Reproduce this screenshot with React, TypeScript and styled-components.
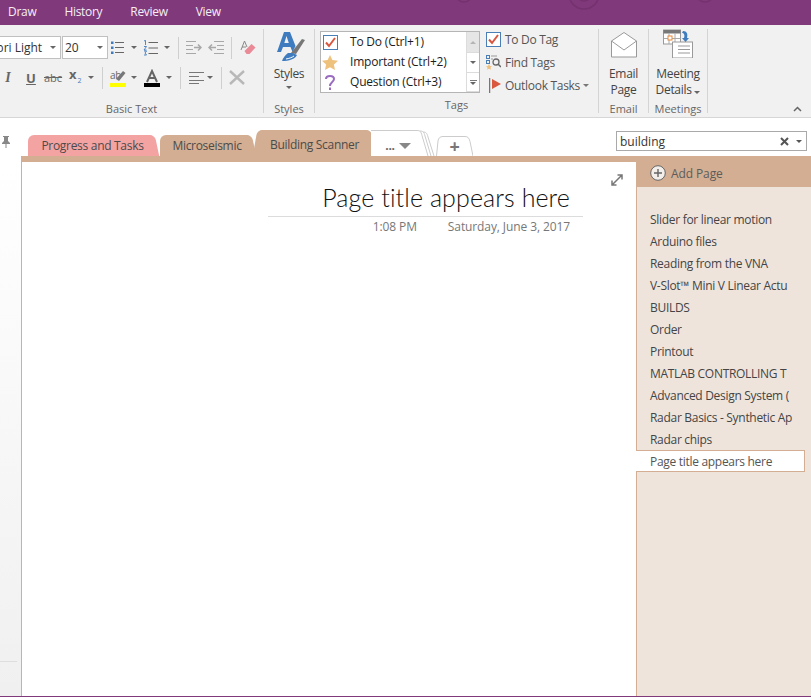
import React from "react";
import styled, { createGlobalStyle } from "styled-components";

const Global = createGlobalStyle`
  html, body { margin: 0; padding: 0; width: 811px; height: 697px; overflow: hidden; background: #fff; }
  body { font-family: "Open Sans", "Noto Sans", "Liberation Sans", sans-serif; letter-spacing: -0.3px; }
  * { box-sizing: border-box; }
`;

const Shell = styled.div`
  width: 811px; height: 697px; display: flex; flex-direction: column; overflow: hidden;
  border-bottom: 1px solid #80397b;
`;
const TitleBar = styled.div`
  position: relative; height: 25px; flex: none; background: #80397b; color: #fff;
  display: flex; align-items: center; font-size: 12px; padding: 0 0 2px 8px; gap: 28px; overflow: hidden;
`;
const Swirl = styled.svg`position: absolute; left: 440px; top: 0;`;
const Menu = styled.span`color: #f6eef5;`;

const Ribbon = styled.div`
  height: 93px; flex: none; background: #f1f1f1; border-bottom: 1px solid #d6d6d6;
  display: flex; position: relative; padding-top: 4px; color: #444;
`;
const Group = styled.section<{ $w: number }>`
  width: ${p => p.$w}px; height: 84px; flex: none; border-right: 1px solid #d4d4d4;
  display: flex; flex-direction: column; position: relative;
`;
const GroupBody = styled.div`height: 72px; flex: none; display: flex; flex-direction: column;`;
const GroupLabel = styled.div`
  text-align: center; font-size: 11px; line-height: 16px; color: #666; letter-spacing: 0;
`;
const ToolRow = styled.div<{ $top: number }>`
  display: flex; align-items: center; height: 23px; margin-top: ${p => p.$top}px;
`;
const SelectBox = styled.div<{ $w: number; $ml?: number }>`
  width: ${p => p.$w}px; height: 23px; flex: none; margin-left: ${p => p.$ml ?? 0}px; background: #fff;
  border: 1px solid #c0c0c0; display: flex; align-items: center; justify-content: space-between;
  font-size: 12px; color: #333; padding: 0 4px 0 2px; letter-spacing: 0;
`;
const SelectText = styled.span<{ $indent?: number }>`padding-left: ${p => p.$indent ?? 0}px; white-space: nowrap;`;
const Caret = styled.i<{ $ml?: number; $mr?: number; $c?: string; $s?: number }>`
  display: inline-block; flex: none; width: 0; height: 0; margin-left: ${p => p.$ml ?? 0}px; margin-right: ${p => p.$mr ?? 0}px;
  border-left: ${p => p.$s ?? 3}px solid transparent; border-right: ${p => p.$s ?? 3}px solid transparent;
  border-top: ${p => p.$s ?? 3}px solid ${p => p.$c ?? "#666"};
`;
const Ico = styled.svg<{ $ml?: number }>`flex: none; display: block; margin-left: ${p => p.$ml ?? 0}px;`;
const VLine = styled.span<{ $ml: number; $h?: number }>`
  flex: none; width: 1px; height: ${p => p.$h ?? 22}px; background: #cfcfcf; margin-left: ${p => p.$ml}px;
`;
const Fmt = styled.span<{ $w: number; $ml: number }>`
  flex: none; width: ${p => p.$w}px; margin-left: ${p => p.$ml}px; text-align: center; color: #666;
  font-size: 13px; line-height: 16px; letter-spacing: 0;
`;
const Italic = styled(Fmt)`font-style: italic; font-family: "Liberation Serif", serif; font-weight: 700; font-size: 14px;`;
const Under = styled(Fmt)`text-decoration: underline; font-weight: 700; font-size: 13px;`;
const Strike = styled(Fmt)`text-decoration: line-through; font-size: 11px;`;
const Sub = styled(Fmt)`font-weight: 700; font-size: 13px; text-align: left; sub { font-size: 7px; color: #3f7cbf; font-weight: 400; margin-left: 1px; }`;

const BigTool = styled.div`
  display: flex; flex-direction: column; align-items: center; font-size: 12px; line-height: 16px; color: #444;
`;
const BigIcon = styled.div<{ $h: number }>`height: ${p => p.$h}px; flex: none; display: flex; align-items: flex-end; justify-content: center;`;
const BigText = styled.span<{ $mt?: number }>`margin-top: ${p => p.$mt ?? 0}px; white-space: nowrap;`;
const BigCaretRow = styled.div`height: 11px; display: flex; align-items: center;`;

const TagsBody = styled.div`display: flex; padding: 2px 0 0 5px; height: 72px;`;
const Gallery = styled.div`
  width: 160px; height: 62px; border: 1px solid #b5b5b5; background: #fff; display: flex; flex: none;
`;
const GalleryList = styled.div`flex: 1; display: flex; flex-direction: column;`;
const GalleryItem = styled.div`
  height: 20px; display: flex; align-items: center; font-size: 12px; color: #1c1c1c; white-space: nowrap; padding-bottom: 2px; letter-spacing: -0.2px;
`;
const GalleryIcon = styled.span`width: 29px; flex: none; display: flex; justify-content: flex-start; padding-left: 1px; margin-top: 2px;`;
const IconSlot = styled.span`width: 16px; display: flex; justify-content: center;`;
const ScrollCol = styled.div`width: 13px; flex: none; display: flex; flex-direction: column; border-left: 1px solid #dcdcdc;`;
const ScrollBtn = styled.div<{ $bg?: string; $h: number }>`
  height: ${p => p.$h}px; background: ${p => p.$bg ?? "#fff"}; display: flex; flex-direction: column; gap: 1px; align-items: center; justify-content: center;
  border-bottom: 1px solid #dcdcdc;
`;
const UpCaret = styled.i`
  display: block; width: 0; height: 0; border-left: 3px solid transparent; border-right: 3px solid transparent; border-bottom: 3px solid #b5b5b5;
`;
const Bar = styled.i`display: block; width: 7px; height: 1px; background: #777;`;
const TagActions = styled.div`display: flex; flex-direction: column; margin-left: 6px; margin-top: -3px;`;
const TagAction = styled.div`
  height: 23px; display: flex; align-items: center; font-size: 12px; color: #555; white-space: nowrap; gap: 4px;
`;
const Collapse = styled.svg`position: absolute; right: 9px; bottom: 5px;`;

const TabStrip = styled.div`
  height: 38px; flex: none; display: flex; align-items: flex-end; background: #fff; position: relative; isolation: isolate;
`;
const Pin = styled.svg`flex: none; margin: 0 17px 8px 1px; align-self: flex-end;`;
const Tab = styled.div<{ $w: number; $h: number; $bg: string; $ml?: number; $fg?: string }>`
  position: relative; width: ${p => p.$w}px; height: ${p => p.$h}px; margin-left: ${p => p.$ml ?? 0}px; flex: none;
  font-size: 12px; color: ${p => p.$fg ?? "#4b4b4b"}; display: flex; align-items: center; justify-content: center; white-space: nowrap;
  background: ${p => p.$bg}; border-radius: 6px 6px 0 0;
  padding-left: 3px;
  &::after {
    content: ""; position: absolute; top: 0; bottom: 0; right: -3px; width: 10px; background: ${p => p.$bg};
    transform: skewX(12deg); border-radius: 0 5px 0 0; z-index: -1;
  }
`;
const ActiveTab = styled(Tab)`
  padding: 2px 0 0 0;
  &::before {
    content: ""; position: absolute; top: 0; bottom: 0; left: -3px; width: 10px; background: ${p => p.$bg};
    transform: skewX(-10deg); border-radius: 5px 0 0 0; z-index: -1;
  }
`;
const TabLabel = styled.span`
  position: relative; display: flex; align-items: center; gap: 4px; font-size: 12px; font-weight: 700; color: #666;
`;
const OverflowTab = styled.div`
  position: relative; flex: none; width: 60px; height: 26px; background: #fff;
  display: flex; align-items: center; justify-content: center; padding: 5px 6px 0 0;
`;
const TabSvg = styled.svg`position: absolute; left: 0; top: 0;`;
const PlusTab = styled.div`
  position: relative; flex: none; width: 37px; height: 20px; margin-left: 5px;
  display: flex; align-items: center; justify-content: center; font-size: 18px; line-height: 1; font-weight: 700; color: #777;
`;
const PlusGlyph = styled.span`position: relative;`;
const Search = styled.div`
  position: absolute; right: 4px; top: 13px; width: 191px; height: 20px; border: 1px solid #a9a9a9; background: #fff;
  display: flex; align-items: center; font-size: 12px; color: #333; padding: 0 4px 0 3px; letter-spacing: 0;
`;
const SearchText = styled.span`flex: 1;`;

const TanBar = styled.div`height: 6px; flex: none; margin-left: 21px; background: #d3ae92;`;
const Main = styled.div`flex: 1; min-height: 0; display: flex;`;
const LeftRail = styled.div`
  width: 22px; flex: none; background: linear-gradient(#fff 0%, #f0f0f0 100%); border-right: 1px solid #d3ae92;
  display: flex; flex-direction: column; justify-content: flex-end;
`;
const RailRule = styled.div`height: 1px; width: 17px; background: #dedede; margin-bottom: 34px;`;
const Page = styled.div`width: 614px; flex: none; background: #fff; position: relative; padding: 20px 0 0 246px;`;
const Expand = styled.svg`position: absolute; right: 13px; top: 12px;`;
const PageHead = styled.div`width: 315px;`;
const PageTitle = styled.div`
  font-family: "Lato", "Open Sans", sans-serif; font-weight: 300; font-size: 25px; letter-spacing: 0.1px; line-height: 31px; color: #111; text-align: right;
  padding-right: 13px; border-bottom: 1px solid #dcdcdc; white-space: nowrap; height: 35px;
`;
const PageMeta = styled.div`
  display: flex; justify-content: flex-end; gap: 31px; padding-right: 13px; font-size: 12px; letter-spacing: -0.1px; line-height: 20px; color: #777;
`;
const Side = styled.aside`
  flex: 1; min-width: 0; background: #efe4dc; display: flex; flex-direction: column; border-left: 1px solid #d3ae92;
`;
const AddPage = styled.div`
  height: 25px; flex: none; margin-left: -1px; background: #d3ae92; display: flex; align-items: center; gap: 5px; padding: 0 0 3px 14px;
  font-size: 12px; color: #5c5c5c; letter-spacing: -0.1px;
`;
const PageList = styled.div`padding-top: 21px; display: flex; flex-direction: column;`;
const PageItem = styled.div<{ $active?: boolean }>`
  height: 22px; flex: none; display: flex; align-items: center; padding-left: 13px; font-size: 12px; white-space: nowrap;
  color: #444; margin-right: ${p => (p.$active ? "6px" : "0")};
  ${p => p.$active && `
    background: #fff; border: 1px solid #d3ae92; border-left: 0; margin-left: -1px; padding-left: 14px; color: #555;
  `}
`;

const pages = [
  "Slider for linear motion", "Arduino files", "Reading from the VNA", "V-Slot™ Mini V Linear Actu", "BUILDS", "Order",
  "Printout", "MATLAB CONTROLLING T", "Advanced Design System (", "Radar Basics - Synthetic Ap", "Radar chips",
];

const CheckBox = () => (
  <Ico width={15} height={15} viewBox="0 0 15 15">
    <rect x=".5" y=".5" width="14" height="14" fill="#fff" stroke="#4a7fb5" />
    <path d="M3 7.5 6 11l6-8" fill="none" stroke="#d9563f" strokeWidth="2" />
  </Ico>
);

export default function App() {
  return (
    <Shell>
      <Global />
      <TitleBar>
        <Menu>Draw</Menu><Menu>History</Menu><Menu>Review</Menu><Menu>View</Menu>
        <Swirl width="290" height="25" viewBox="0 0 290 25" fill="none" stroke="#74326f" strokeWidth="1.5">
          <circle cx="144" cy="-6" r="7" /><circle cx="144" cy="-6" r="15" /><circle cx="24" cy="-6" r="8" /><circle cx="265" cy="-6" r="8" />
        </Swirl>
      </TitleBar>

      <Ribbon>
        <Group $w={264}>
          <GroupBody>
            <ToolRow $top={7}>
              <SelectBox $w={101} $ml={-40}><SelectText $indent={13}>Calibri Light</SelectText><Caret /></SelectBox>
              <SelectBox $w={46} $ml={1}><SelectText>20</SelectText><Caret /></SelectBox>
              <Ico $ml={2} width="15" height="15" viewBox="0 0 15 15"><path d="M5 2.5h9M5 7.5h9M5 12.5h9" stroke="#666" /><path d="M1 1.5h2.5v2.5H1zM1 6.5h2.5V9H1zM1 11.5h2.5V14H1z" fill="#3f7cbf" /></Ico>
              <Caret $ml={6} />
              <Ico $ml={6} width="15" height="16" viewBox="0 0 15 16"><path d="M5.5 2.5H15M5.5 8H15M5.5 13.5H15" stroke="#666" /><path d="M1 1l1.5-.7V5M1 6.5h2.5L1 10h2.5M1 11h2.5L2 13l1.5 2H1" fill="none" stroke="#3f7cbf" strokeWidth=".9" /></Ico>
              <Caret $ml={6} />
              <VLine $ml={8} />
              <Ico $ml={7} width="16" height="13" viewBox="0 0 16 13"><path d="M0 .5h10M0 4.5h7M0 8.5h7M0 12.5h10" stroke="#a8a8a8" /><path d="M8 6.5h7M12 3.5l3 3-3 3" fill="none" stroke="#a8a8a8" strokeWidth="1.5" /></Ico>
              <Ico $ml={6} width="16" height="13" viewBox="0 0 16 13"><path d="M6 .5h10M9 4.5h7M9 8.5h7M6 12.5h10" stroke="#a8a8a8" /><path d="M8 6.5H1M4 3.5l-3 3 3 3" fill="none" stroke="#a8a8a8" strokeWidth="1.5" /></Ico>
              <VLine $ml={7} />
              <Ico $ml={8} width="16" height="16" viewBox="0 0 16 16"><path d="M1 10 4.500 1 7 7M2 7h4" fill="none" stroke="#888" /><path d="m4.500 11 7-7 4 3.500-6 6.500-3 0z" fill="#e98a96" /></Ico>
            </ToolRow>
            <ToolRow $top={7}>
              <Italic $w={10} $ml={3}>I</Italic>
              <Under $w={12} $ml={12}>U</Under>
              <Strike $w={17} $ml={7}>abc</Strike>
              <Sub $w={16} $ml={8}>x<sub>2</sub></Sub>
              <Caret $ml={3} />
              <VLine $ml={8} />
              <Ico $ml={7} width="16" height="18" viewBox="0 0 16 18"><text x="0" y="10" fontSize="10" fill="#666">ab</text><path d="m6 10 7-8 2.5 2L9 12z" fill="#777" /><rect y="14" width="16" height="4" fill="#ffff00" /></Ico>
              <Caret $ml={5} />
              <Ico $ml={7} width="16" height="18" viewBox="0 0 16 18"><path d="M3 13 8 2l5 11M5 9h6" fill="none" stroke="#666" strokeWidth="2" /><rect y="14" width="16" height="4" fill="#000" /></Ico>
              <Caret $ml={6} />
              <VLine $ml={8} />
              <Ico $ml={8} width="15" height="12" viewBox="0 0 15 12"><path d="M0 .5h15M0 4.5h10M0 8.5h15M0 11.5h10" stroke="#777" /></Ico>
              <Caret $ml={3} />
              <VLine $ml={8} />
              <Ico $ml={7} width="16" height="15" viewBox="0 0 16 15"><path d="m1 1 14 13M15 1 1 14" stroke="#b8b8b8" strokeWidth="2.4" /></Ico>
            </ToolRow>
          </GroupBody>
          <GroupLabel>Basic Text</GroupLabel>
        </Group>

        <Group $w={51}>
          <GroupBody>
            <BigTool>
              <BigIcon $h={33}>
                <Ico $ml={3} width="28" height="30" viewBox="0 0 28 30">
                  <path d="M0 20 7 0h6l5.500 14-3 6-2-5H6l-2 5z M7.300 11h4.500L9.500 4z" fill="#3f7cbf" fillRule="evenodd" />
                  <path d="m14 21 11-14 3 1-9 14z" fill="#777" />
                  <path d="M5 29c1-3 3-6 6-8h5l4 2c-2 4-8 6-15 6z" fill="#3f7cbf" />
                  <path d="M9 27c3-.5 6-1.500 8-3" fill="none" stroke="#fff" />
                </Ico>
              </BigIcon>
              <BigText $mt={4}>Styles</BigText>
              <BigCaretRow><Caret /></BigCaretRow>
            </BigTool>
          </GroupBody>
          <GroupLabel>Styles</GroupLabel>
        </Group>

        <Group $w={284}>
          <TagsBody>
            <Gallery>
              <GalleryList>
                <GalleryItem><GalleryIcon><IconSlot><CheckBox /></IconSlot></GalleryIcon>To Do (Ctrl+1)</GalleryItem>
                <GalleryItem><GalleryIcon><IconSlot><Ico width="16" height="15" viewBox="0 0 16 15"><path d="m8 0 2.4 5 5.600.7-4.100 3.800 1.100 5.500L8 12.300 3 15l1.100-5.500L0 5.700 5.600 5z" fill="#eec17d" /></Ico></IconSlot></GalleryIcon>Important (Ctrl+2)</GalleryItem>
                <GalleryItem><GalleryIcon><IconSlot><Ico width="10" height="15" viewBox="0 0 10 15"><path d="M1 4c0-4 8-4 8 0 0 3-4 3-4 7" fill="none" stroke="#9a6cc0" strokeWidth="2" /><rect x="4" y="12.5" width="2" height="2.5" fill="#9a6cc0" /></Ico></IconSlot></GalleryIcon>Question (Ctrl+3)</GalleryItem>
              </GalleryList>
              <ScrollCol>
                <ScrollBtn $h={21} $bg="#e6e6e6"><UpCaret /></ScrollBtn>
                <ScrollBtn $h={20}><Caret /></ScrollBtn>
                <ScrollBtn $h={19}><Bar /><Caret /></ScrollBtn>
              </ScrollCol>
            </Gallery>
            <TagActions>
              <TagAction><CheckBox />To Do Tag</TagAction>
              <TagAction>
                <Ico width="15" height="15" viewBox="0 0 15 15"><rect x=".5" y=".5" width="3" height="3" fill="none" stroke="#4a7fb5" /><rect x=".5" y="5.5" width="3" height="3" fill="none" stroke="#4a7fb5" /><path d="M5 1h6M5 4h2" stroke="#999" /><circle cx="10" cy="7" r="3" fill="none" stroke="#666" strokeWidth="1.3" /><path d="m12 9 3 3" stroke="#666" strokeWidth="1.5" /><path d="m3 9 1 2 2 .2-1.500 1.400.4 2.200L3 13.800 1.100 14.800l.4-2.200L0 11.200 2 11z" fill="#eec17d" /></Ico>
                Find Tags
              </TagAction>
              <TagAction>
                <Ico $ml={3} width="12" height="15" viewBox="0 0 12 15"><path d="M.5 0v15" stroke="#777" strokeWidth="1.5" /><path d="M3 1l9 5-9 5z" fill="#d9563f" /></Ico>
                <span>Outlook Tasks</span><Caret $ml={-1} $c="#777" />
              </TagAction>
            </TagActions>
          </TagsBody>
          <GroupLabel>Tags</GroupLabel>
        </Group>

        <Group $w={50}>
          <GroupBody>
            <BigTool>
              <BigIcon $h={29}>
                <Ico width="26" height="26" viewBox="0 0 26 26"><path d="M.5 9 13 .5 25.500 9v16H.5z" fill="#fff" stroke="#999" /><path d="m.5 9 12.500 9 12.500-9" fill="none" stroke="#999" /></Ico>
              </BigIcon>
              <BigText $mt={8}>Email</BigText>
              <BigText>Page</BigText>
            </BigTool>
          </GroupBody>
          <GroupLabel>Email</GroupLabel>
        </Group>

        <Group $w={59}>
          <GroupBody>
            <BigTool>
              <BigIcon $h={29}>
                <Ico width="30" height="29" viewBox="0 0 30 29">
                  <rect x=".5" y="1" width="17" height="14" fill="#fff" stroke="#999" /><rect x=".5" y="1" width="17" height="3.5" fill="#777" />
                  <path d="M6 4.5V15M12 4.5V15M.5 9.5h17" stroke="#aaa" /><rect x="5" y="7" width="4" height="4" fill="#fff" stroke="#e8873a" />
                  <rect x="9.5" y="13" width="20" height="16" fill="#fff" stroke="#999" />
                  <path d="M15 17h12M15 20.5h12M15 24h12" stroke="#999" />
                  <path d="M20 2c4 0 5 3 4 7h2l-3.500 4L19 9h2c1-3 0-5-2-5z" fill="#3f7cbf" />
                </Ico>
              </BigIcon>
              <BigText $mt={8}>Meeting</BigText>
              <BigText>Details <Caret /></BigText>
            </BigTool>
          </GroupBody>
          <GroupLabel>Meetings</GroupLabel>
        </Group>
        <Collapse width="9" height="6" viewBox="0 0 9 6"><path d="m1 5 3.500-3.500L8 5" fill="none" stroke="#666" strokeWidth="1.5" /></Collapse>
      </Ribbon>

      <TabStrip>
        <Pin width="10" height="12" viewBox="0 0 10 12"><path d="M2 0h6v1H7v4l2 2v1H5.500v4h-1V8H1V7l2-2V1H2z" fill="#888" /></Pin>
        <Tab $w={126} $h={21} $bg="#f4a3a3">Progress and Tasks</Tab>
        <Tab $w={91} $h={21} $bg="#d3ae92" $ml={6}>Microseismic</Tab>
        <ActiveTab $w={113} $h={26} $bg="#d3ae92" $ml={7}>Building Scanner</ActiveTab>
        <OverflowTab>
          <TabSvg width="66" height="26" viewBox="0 0 66 26" fill="none" stroke="#ccc"><path d="M0 .5h46c3 0 4 1 5 5l6 20.500M49 1c3 0 4 1 5 5l6 20M52 2c3 0 4 1 5 5l6 19" /></TabSvg>
          <TabLabel>...<Caret $c="#888" $s={6} /></TabLabel>
        </OverflowTab>
        <PlusTab>
          <TabSvg width="37" height="20" viewBox="0 0 37 20" fill="none" stroke="#ccc"><path d="M.5 20 2 5C2.500 2 4 .5 7 .5h22c3 0 4 1.500 5 5l3 14.500" /></TabSvg>
          <PlusGlyph>+</PlusGlyph>
        </PlusTab>
        <Search>
          <SearchText>building</SearchText>
          <Ico width="9" height="9" viewBox="0 0 9 9"><path d="m1 1 7 7M8 1 1 8" stroke="#555" strokeWidth="2" /></Ico>
          <Caret $ml={7} $c="#555" />
        </Search>
      </TabStrip>

      <TanBar />
      <Main>
        <LeftRail><RailRule /></LeftRail>
        <Page>
          <Expand width="12" height="12" viewBox="0 0 12 12" fill="none" stroke="#777" strokeWidth="1.5"><path d="m1.500 10.500 9-9M6.500 1h4.500v4.500M1 6.500V11h4.500" /></Expand>
          <PageHead>
            <PageTitle>Page title appears here</PageTitle>
            <PageMeta><span>1:08 PM</span><span>Saturday, June 3, 2017</span></PageMeta>
          </PageHead>
        </Page>
        <Side>
          <AddPage>
            <Ico width="16" height="16" viewBox="0 0 16 16"><circle cx="8" cy="8" r="7.3" fill="#f3eeea" stroke="#666" /><path d="M8 4v8M4 8h8" stroke="#666" strokeWidth="1.4" /></Ico>
            Add Page
          </AddPage>
          <PageList>
            {pages.map(p => <PageItem key={p}>{p}</PageItem>)}
            <PageItem $active>Page title appears here</PageItem>
          </PageList>
        </Side>
      </Main>
    </Shell>
  );
}
